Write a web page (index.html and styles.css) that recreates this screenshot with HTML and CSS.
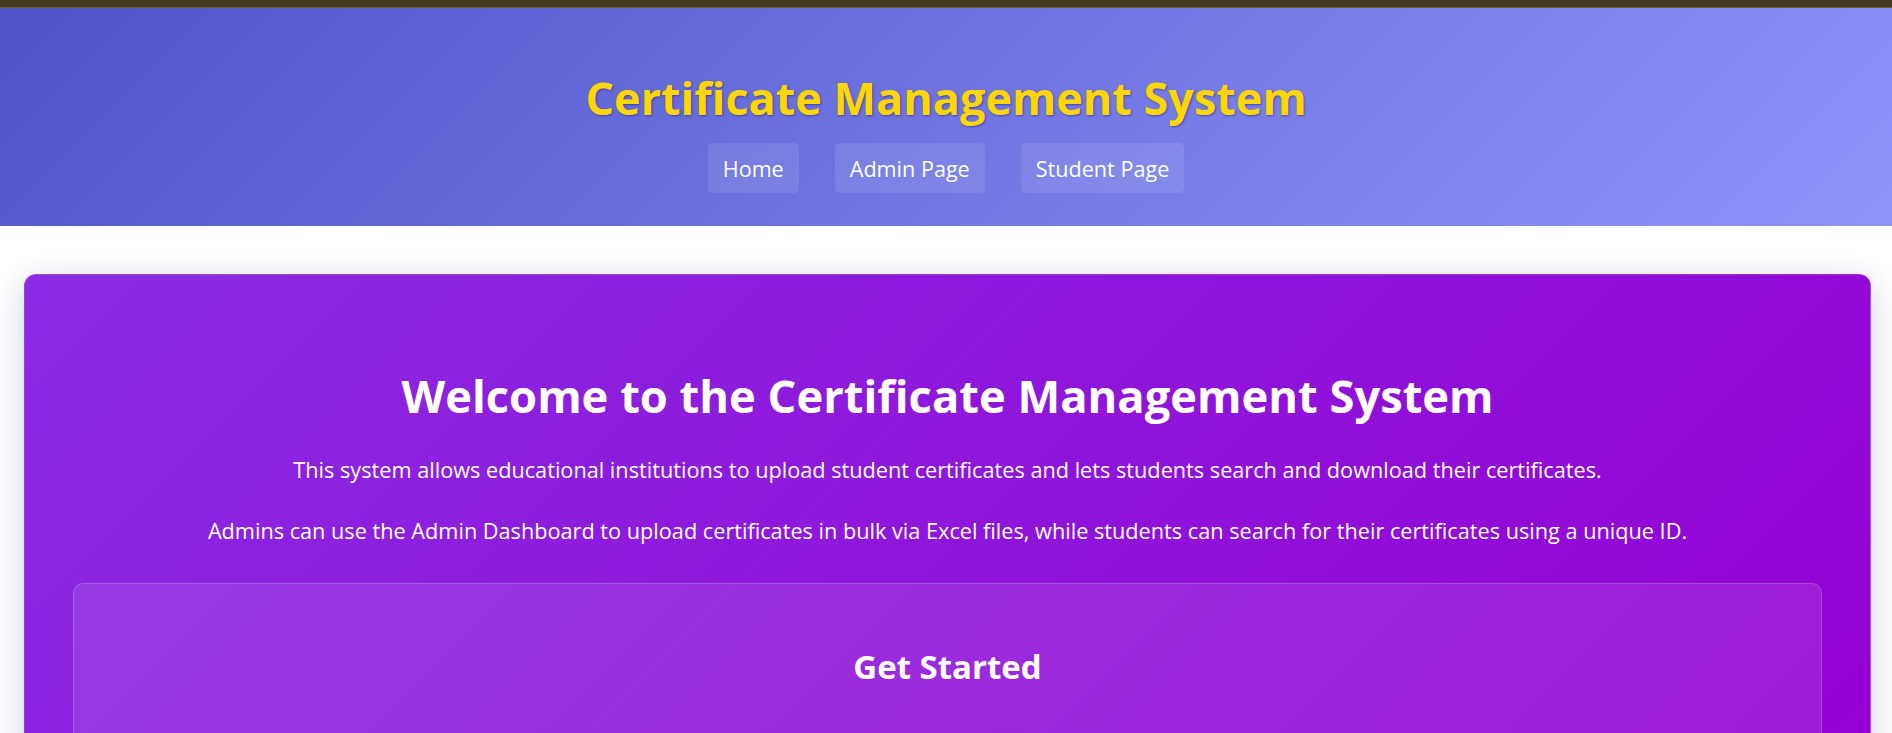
FILE: index.html
```html
<!DOCTYPE html>
<html lang="en">
<head>
<meta charset="utf-8">
<title>Certificate Management System</title>
<link rel="stylesheet" href="styles.css">
</head>
<body>
<div class="topbar"></div>
<header class="site-header">
  <h1 class="site-title">Certificate Management System</h1>
  <nav class="site-nav">
    <a class="nav-link" href="#">Home</a>
    <a class="nav-link" href="#">Admin Page</a>
    <a class="nav-link" href="#">Student Page</a>
  </nav>
</header>
<main class="main">
  <section class="hero">
    <h2 class="hero-title">Welcome to the Certificate Management System</h2>
    <p class="hero-text">This system allows educational institutions to upload student certificates and lets students search and download their certificates.</p>
    <p class="hero-text">Admins can use the Admin Dashboard to upload certificates in bulk via Excel files, while students can search for their certificates using a unique ID.</p>
    <div class="start-box">
      <h3 class="start-title">Get Started</h3>
    </div>
  </section>
</main>
</body>
</html>
```

FILE: styles.css
```css
* { box-sizing: border-box; }

body {
  margin: 0;
  font-family: "Segoe UI", "Open Sans", "Noto Sans", sans-serif;
  background: #ffffff;
  color: #ffffff;
}

.topbar {
  height: 8px;
  background: #433b1f;
  border-bottom: 1px solid #6b5d2c;
}

.site-header {
  background: linear-gradient(135deg, #4e54c8, #8f94fb);
  padding: 61px 0 33px;
  text-align: center;
}

.site-title {
  margin: 0;
  font-size: 45px;
  line-height: 58px;
  font-weight: 700;
  color: #ffd700;
  text-shadow: 1px 1px 2px rgba(20, 20, 120, 0.5);
}

.site-nav {
  margin-top: 16px;
  display: flex;
  justify-content: center;
  gap: 36px;
}

.nav-link {
  display: block;
  padding: 12px 15px 11px;
  font-size: 21.6px;
  line-height: 27px;
  color: #ffffff;
  text-decoration: none;
  background: rgba(255, 255, 255, 0.1);
  border-radius: 5px;
}

.main {
  padding: 48px 21px 40px 24px;
}

.hero {
  background: linear-gradient(135deg, #8a2be2, #9400d3);
  border: 1px solid rgba(255, 255, 255, 0.18);
  border-radius: 12px;
  padding: 0 48px 48px;
  box-shadow: 0 8px 32px rgba(31, 38, 135, 0.22);
  text-align: center;
}

.hero-title {
  margin: 0 0 28px;
  padding-top: 92px;
  font-size: 45.3px;
  line-height: 58px;
  font-weight: 700;
}

.hero-text {
  margin: 0 0 27px;
  font-size: 21.7px;
  line-height: 34px;
}

.start-box {
  margin-top: 35px;
  background: rgba(255, 255, 255, 0.1);
  border: 1px solid rgba(255, 255, 255, 0.18);
  border-radius: 10px;
  padding: 62px 48px 60px;
}

.start-title {
  margin: 0;
  font-size: 33px;
  line-height: 42px;
  font-weight: 700;
}
```
